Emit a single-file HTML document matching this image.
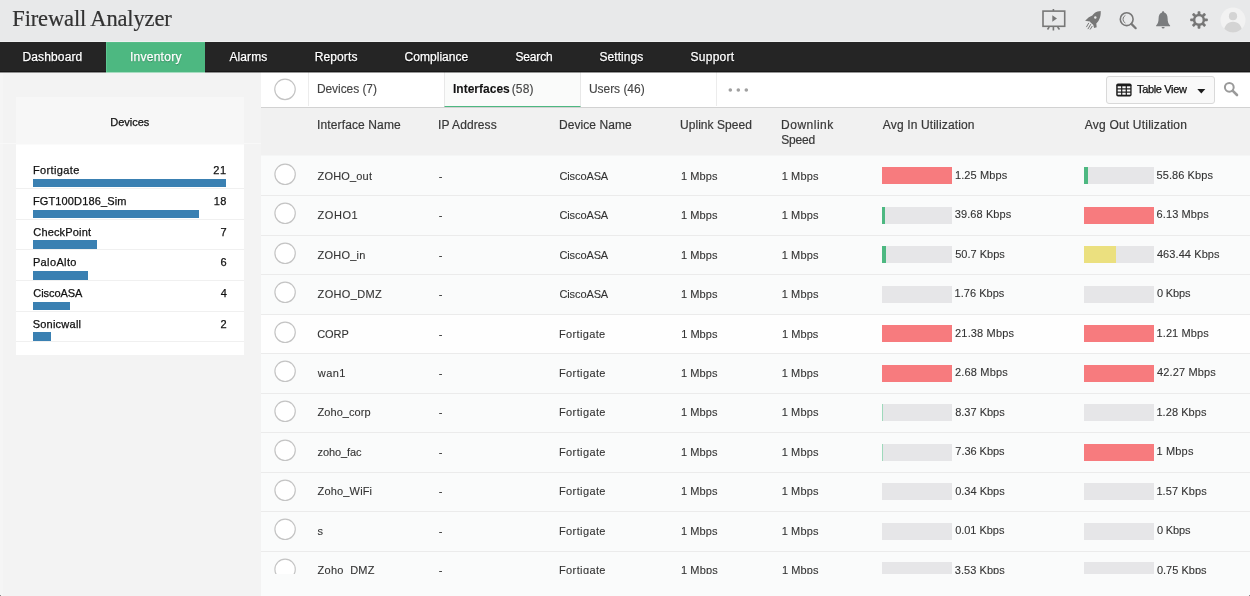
<!DOCTYPE html>
<html>
<head>
<meta charset="utf-8">
<title>Firewall Analyzer</title>
<style>
*{box-sizing:border-box;margin:0;padding:0}
html,body{width:1250px;height:596px;overflow:hidden;background:#f3f3f3;font-family:"Liberation Sans",sans-serif;color:#333}
body>div{will-change:transform}
#top{position:absolute;left:0;top:0;width:1250px;height:42px;background:#e8e9ea;border-bottom:1px solid #eff0f0}
#title{position:absolute;left:12.3px;top:6px;-webkit-text-stroke:0.2px #333;font-family:"Liberation Serif",serif;font-size:22.5px;line-height:26px;color:#333;letter-spacing:-0.15px;white-space:nowrap}
#top svg{position:absolute}
#nav{position:absolute;left:0;top:42px;width:1250px;height:30px;background:#252525;z-index:2}
#nav .ln{position:absolute;left:0;top:29px;width:1250px;height:2px;background:linear-gradient(#171717 50%,rgba(23,23,23,0.45) 50%)}
#nav .lg{position:absolute;left:106px;top:30px;width:99px;height:1px;background:#a6dcc0}
#nav span{position:absolute;top:0;height:30px;line-height:30px;color:#fff;font-size:12px;white-space:nowrap;text-shadow:0 1px 1px #000;-webkit-text-stroke:0.25px #fff}
#nav .act{position:absolute;left:106px;top:0;width:99px;height:30px;background:#4db881;border-left:1px solid #5ec792;border-top:1px solid #55bd88}
#nav span#t2{text-shadow:0 1px 1px rgba(0,60,30,0.45)}
#lstrip{position:absolute;left:0;top:73px;width:3px;height:523px;background:#f5f5f5}
.cnr{position:absolute;top:595px;width:1px;height:1px;background:#8a8a8a;z-index:5}
#sideline{position:absolute;left:0;top:143px;width:261px;height:1px;background:#f8f8f8}
#side{position:absolute;left:16px;top:97px;width:228px;height:258px;background:#fff}
#sidehd{position:absolute;left:0;top:0;width:228px;height:47.5px;background:#f7f7f7;border-bottom:1px solid #fbfbfb}
#sidehd span{position:absolute;top:18px;font-size:11px;line-height:14px;color:#111;white-space:nowrap;-webkit-text-stroke:0.25px #111}
.dv{position:absolute;left:0;width:228px;height:30.7px;border-bottom:1px solid #f0f0f0}
.dv span{position:absolute;top:5px;font-size:11px;line-height:14px;color:#111;white-space:nowrap;-webkit-text-stroke:0.25px #111}
.dv .b{position:absolute;left:17px;top:20.7px;height:8.5px;background:#3a80b2}
#main{position:absolute;left:261px;top:72px;width:989px;height:524px;background:#fafbfb}
#clip{position:absolute;left:0;top:0;width:989px;height:502px;overflow:hidden}
#tabs{position:absolute;left:0;top:0;width:989px;height:36px;background:#fff;border-bottom:1px solid #d2d2d2}
#tabs>span{position:absolute;top:1px;height:34px;line-height:33px;font-size:12px;color:#444;-webkit-text-stroke:0.12px #444;white-space:nowrap}
.tact{position:absolute;left:183px;top:0;width:137px;height:35px;border-left:1px solid #e8e8e8;border-right:1px solid #e8e8e8;border-bottom:1px solid #4db881;background:#fafbfa}
.vd{position:absolute;top:0;width:1px;height:34px;background:#ececec}
.dots{position:absolute;left:465px;top:14.4px}
svg.circ{position:absolute;left:0;top:0}
#thead{position:absolute;left:0;top:36px;width:989px;height:48px;background:#f1f1f1;border-bottom:1px solid #f5f6f6}
#thead span{position:absolute;top:10px;font-size:12px;line-height:15px;color:#383838;white-space:nowrap;-webkit-text-stroke:0.2px #383838}
.row{position:absolute;left:0;width:989px;height:39.5px;border-bottom:1px solid #ebebeb;background:#fafbfb}
.row span{position:absolute;top:12px;font-size:11px;line-height:14px;color:#333;white-space:nowrap;-webkit-text-stroke:0.1px #333}
.row span.v{top:11px}
.up span{top:11px}
.hv{background:#fefefe}
.bar{position:absolute;top:10.5px;width:70px;height:17px;background:#e6e6e8}
.bar i{position:absolute;left:0;top:0;height:100%;display:block}
.r{background:#f77b7e}.g{background:#4db881}.g2{background:#9ed9bb}.y{background:#ebe07f}
#tv{position:absolute;left:845px;top:4px;width:109px;height:27.5px;border:1px solid #d9d9d9;border-radius:3px;background:#f9f9f9}
#tv span{position:absolute;top:0;line-height:25px;font-size:11px;color:#111;white-space:nowrap;-webkit-text-stroke:0.25px #111}
#tv svg{position:absolute}
#tabs>svg{position:absolute}
</style>
</head>
<body>
<div id="top"><div id="title">Firewall Analyzer</div>
<svg style="left:1042px;top:9px" width="25" height="22" viewBox="0 0 25 22"><rect x="1" y="2.100" width="21.700" height="15.200" fill="none" stroke="#777" stroke-width="1.600"/><path d="M11.400 0v2M11.400 18v3.400M7.200 18l-1.700 2.500M15.600 18l1.900 2.500" stroke="#777" stroke-width="1.600" fill="none"/><path d="M10.300 6.300v6.400l4.700-3.200z" fill="#777"/></svg>
<svg style="left:1085px;top:10px" width="17" height="20" viewBox="0 0 17 20"><path d="M15.700 0.900C15.900 4 15.500 6.500 14.400 9C13.800 10.500 12.500 12.500 11.300 13.500L11.700 17.300L9.100 17.900L8.200 14.700C7 14.200 5.600 12.800 4.900 11.600L0.100 10.700L3.800 7.200L7.300 5.400C9 3.200 10.800 1.900 12.600 1.500C13.600 1.200 14.700 1 15.700 0.900Z" fill="#777"/><circle cx="10.300" cy="7.500" r="1.200" fill="#e8e9ea"/><path d="M3.800 12.900l-2.400 4.200M5.800 14.200l-2.900 4.900M7.300 16l-2.200 3.500" stroke="#777" stroke-width="1"/></svg>
<svg style="left:1119px;top:11.500px" width="19" height="18" viewBox="0 0 19 18"><circle cx="7.700" cy="7.200" r="6.400" fill="none" stroke="#777" stroke-width="1.600"/><path d="M6.400 3.400a4.200 4.200 0 0 0 0 7.600" fill="none" stroke="#777" stroke-width="1"/><path d="M12.400 11.900l4.300 4.300" stroke="#777" stroke-width="2.200" stroke-linecap="round"/></svg>
<svg style="left:1156px;top:11px" width="15" height="18" viewBox="0 0 15 18"><path d="M7.100 0.300C7.800 0.300 8.200 0.800 8.200 1.500C10.400 2.200 11.600 4.400 11.600 7.200C11.600 11 12.500 12.900 14.100 14.400L14.100 15.300L0.100 15.300L0.100 14.400C1.700 12.900 2.600 11 2.600 7.200C2.600 4.400 3.800 2.200 6 1.500C6 0.800 6.400 0.300 7.100 0.300Z" fill="#7a7c7e"/><path d="M5.600 16.100a1.500 1.500 0 0 0 3 0z" fill="#7a7c7e"/></svg>
<svg style="left:1190px;top:11px" width="18" height="18" viewBox="-9 -8.950 18 18"><g fill="#777"><rect x="-1.400" y="-8.800" width="2.800" height="17.600" rx="0.800"/><rect x="-1.400" y="-8.800" width="2.800" height="17.600" rx="0.800" transform="rotate(45)"/><rect x="-1.400" y="-8.800" width="2.800" height="17.600" rx="0.800" transform="rotate(90)"/><rect x="-1.400" y="-8.800" width="2.800" height="17.600" rx="0.800" transform="rotate(135)"/></g><circle r="6.100" fill="#777"/><circle r="3.600" fill="#e8e9ea"/></svg>
<svg style="left:1220px;top:7px" width="26" height="26" viewBox="0 0 26 26"><defs><clipPath id="av"><circle cx="13" cy="13" r="12.500"/></clipPath></defs><circle cx="13" cy="13" r="12.500" fill="#f2f2f2"/><g clip-path="url(#av)" fill="#d4d4d4"><circle cx="13" cy="9.200" r="4.100"/><path d="M3.800 26c0-7.500 4-11.300 9.200-11.300s9.200 3.800 9.200 11.300z"/></g></svg>
</div>
<div id="nav"><div class="ln"></div><div class="act"></div><div class="lg"></div>
<span id="t1" style="left:22.5px;letter-spacing:0.13px">Dashboard</span>
<span id="t2" style="left:129.9px;letter-spacing:0.27px">Inventory</span>
<span id="t3" style="left:229.4px;letter-spacing:0.12px">Alarms</span>
<span id="t4" style="left:314.7px;letter-spacing:0.12px">Reports</span>
<span id="t5" style="left:404.5px;letter-spacing:0.04px">Compliance</span>
<span id="t6" style="left:515.4px;letter-spacing:-0.14px">Search</span>
<span id="t7" style="left:599.5px;letter-spacing:0.04px">Settings</span>
<span id="t8" style="left:690.6px;letter-spacing:0.25px">Support</span>
</div>
<div id="lstrip"></div><div class="cnr" style="left:0"></div><div class="cnr" style="left:1249px"></div>
<div id="sideline"></div>
<div id="side"><div id="sidehd"><span id="t9" style="left:94.3px;letter-spacing:-0.03px">Devices</span></div>
<div class="dv" style="top:61.3px"><span id="t10" style="left:16.9px;letter-spacing:0.38px">Fortigate</span><span id="t11" style="left:197.3px;letter-spacing:0.60px">21</span><div class="b" style="width:193.0px"></div></div>
<div class="dv" style="top:92.0px"><span id="t12" style="left:16.9px;letter-spacing:0.14px">FGT100D186_Sim</span><span id="t13" style="left:197.8px;letter-spacing:0.38px">18</span><div class="b" style="width:166.0px"></div></div>
<div class="dv" style="top:122.7px"><span id="t14" style="left:17.3px;letter-spacing:0.16px">CheckPoint</span><span id="t15" style="left:204.5px;letter-spacing:-0.70px">7</span><div class="b" style="width:64.0px"></div></div>
<div class="dv" style="top:153.4px"><span id="t16" style="left:16.9px;letter-spacing:0.37px">PaloAlto</span><span id="t17" style="left:204.4px;letter-spacing:-0.70px">6</span><div class="b" style="width:55.0px"></div></div>
<div class="dv" style="top:184.1px"><span id="t18" style="left:17.3px;letter-spacing:-0.06px">CiscoASA</span><span id="t19" style="left:204.8px;letter-spacing:-0.70px">4</span><div class="b" style="width:37.0px"></div></div>
<div class="dv" style="top:214.8px"><span id="t20" style="left:16.7px;letter-spacing:0.23px">Sonicwall</span><span id="t21" style="left:204.5px;letter-spacing:-0.53px">2</span><div class="b" style="width:18.0px"></div></div>
</div>
<div id="main">
<div id="clip">
<div id="tabs"><svg class="circ" width="48" height="36"><circle cx="24" cy="17.300" r="10.250" fill="#fff" stroke="#c4c4c4" stroke-width="1.200"/></svg><div class="vd" style="left:47px"></div>
<div class="tact"></div>
<span id="t22" style="left:55.9px;letter-spacing:-0.06px">Devices (7)</span>
<span id="t23" style="left:192.0px;letter-spacing:0.01px;color:#111;font-weight:bold">Interfaces</span><span id="t24" style="left:250.7px;letter-spacing:0.18px">(58)</span>
<span id="t25" style="left:327.9px;letter-spacing:-0.03px">Users (46)</span><div class="vd" style="left:455px"></div>
<svg class="dots" width="30" height="8" viewBox="0 0 30 8"><g fill="#a0a0a0"><circle cx="4.300" cy="4" r="1.800"/><circle cx="12.300" cy="4" r="1.800"/><circle cx="20.300" cy="4" r="1.800"/></g></svg>
<div id="tv"><svg style="left:8.500px;top:6px" width="16" height="14" viewBox="0 0 16 14"><rect x="0.200" y="0.500" width="15.400" height="13" rx="1.800" fill="#1c1c1c"/><g fill="#f9f9f9"><rect x="1.700" y="3.300" width="3.400" height="2"/><rect x="6.300" y="3.300" width="3.400" height="2"/><rect x="10.900" y="3.300" width="3.400" height="2"/><rect x="1.700" y="6.500" width="3.400" height="2"/><rect x="6.300" y="6.500" width="3.400" height="2"/><rect x="10.900" y="6.500" width="3.400" height="2"/><rect x="1.700" y="9.700" width="3.400" height="2"/><rect x="6.300" y="9.700" width="3.400" height="2"/><rect x="10.900" y="9.700" width="3.400" height="2"/></g></svg><span id="t26" style="left:30.0px;letter-spacing:-0.34px">Table View</span><svg style="left:89.500px;top:11.500px" width="9" height="5" viewBox="0 0 9 5"><path d="M0.300 0h8L4.300 4.500z" fill="#1c1c1c"/></svg></div>
<svg style="left:962px;top:8.500px" width="16" height="16" viewBox="0 0 16 16"><circle cx="6.300" cy="6.300" r="4.400" fill="none" stroke="#9a9a9a" stroke-width="2"/><path d="M9.800 9.800l4.200 4.200" stroke="#9a9a9a" stroke-width="2.600" stroke-linecap="round"/></svg>
</div>
<div id="thead"><span id="t27" style="left:56.1px;letter-spacing:0.12px">Interface Name</span><span id="t28" style="left:177.0px;letter-spacing:0.10px">IP Address</span><span id="t29" style="left:298.1px;letter-spacing:0.05px">Device Name</span><span id="t30" style="left:419.0px;letter-spacing:0.04px">Uplink Speed</span><span id="t31" style="left:520.1px;letter-spacing:0.49px">Downlink</span><span id="t32" style="left:621.8px;letter-spacing:0.15px">Avg In Utilization</span><span id="t33" style="left:823.8px;letter-spacing:0.20px">Avg Out Utilization</span><span id="t34" style="left:520.3px;letter-spacing:-0.21px;top:24.6px">Speed</span></div>
<div class="row" style="top:84.5px"><svg class="circ" width="48" height="39"><circle cx="24.100" cy="17.300" r="10.200" fill="#fff" stroke="#c4c4c4" stroke-width="1.200"/></svg><span id="t35" style="left:56.6px;letter-spacing:0.17px">ZOHO_out</span><span id="t36" style="left:177.8px;letter-spacing:-0.70px">-</span><span id="t37" style="left:298.4px;letter-spacing:-0.10px">CiscoASA</span><span id="t38" style="left:419.9px;letter-spacing:0.11px">1 Mbps</span><span id="t39" style="left:520.7px;letter-spacing:0.13px">1 Mbps</span><div class="bar" style="left:621px"><i class="r" style="width:70px"></i></div><span class="v" id="t40" style="left:693.9px;letter-spacing:0.14px">1.25 Mbps</span><div class="bar" style="left:823px"><i class="g" style="width:3.5px"></i></div><span class="v" id="t41" style="left:895.5px;letter-spacing:0.08px">55.86 Kbps</span></div>
<div class="row" style="top:124.0px"><svg class="circ" width="48" height="39"><circle cx="24.100" cy="17.300" r="10.200" fill="#fff" stroke="#c4c4c4" stroke-width="1.200"/></svg><span id="t42" style="left:56.6px;letter-spacing:0.53px">ZOHO1</span><span id="t43" style="left:177.8px;letter-spacing:-0.70px">-</span><span id="t44" style="left:298.4px;letter-spacing:-0.10px">CiscoASA</span><span id="t45" style="left:419.9px;letter-spacing:0.11px">1 Mbps</span><span id="t46" style="left:520.7px;letter-spacing:0.13px">1 Mbps</span><div class="bar" style="left:621px"><i class="g" style="width:2.5px"></i></div><span class="v" id="t47" style="left:693.8px;letter-spacing:0.09px">39.68 Kbps</span><div class="bar" style="left:823px"><i class="r" style="width:70px"></i></div><span class="v" id="t48" style="left:895.5px;letter-spacing:0.12px">6.13 Mbps</span></div>
<div class="row" style="top:163.5px"><svg class="circ" width="48" height="39"><circle cx="24.100" cy="17.300" r="10.200" fill="#fff" stroke="#c4c4c4" stroke-width="1.200"/></svg><span id="t49" style="left:56.6px;letter-spacing:0.22px">ZOHO_in</span><span id="t50" style="left:177.8px;letter-spacing:-0.70px">-</span><span id="t51" style="left:298.4px;letter-spacing:-0.10px">CiscoASA</span><span id="t52" style="left:419.9px;letter-spacing:0.11px">1 Mbps</span><span id="t53" style="left:520.7px;letter-spacing:0.13px">1 Mbps</span><div class="bar" style="left:621px"><i class="g" style="width:3.5px"></i></div><span class="v" id="t54" style="left:694.2px;letter-spacing:0.01px">50.7 Kbps</span><div class="bar" style="left:823px"><i class="y" style="width:31.7px"></i></div><span class="v" id="t55" style="left:895.9px;letter-spacing:0.09px">463.44 Kbps</span></div>
<div class="row" style="top:203.0px"><svg class="circ" width="48" height="39"><circle cx="24.100" cy="17.300" r="10.200" fill="#fff" stroke="#c4c4c4" stroke-width="1.200"/></svg><span id="t56" style="left:56.6px;letter-spacing:0.35px">ZOHO_DMZ</span><span id="t57" style="left:177.8px;letter-spacing:-0.70px">-</span><span id="t58" style="left:298.4px;letter-spacing:-0.10px">CiscoASA</span><span id="t59" style="left:419.9px;letter-spacing:0.11px">1 Mbps</span><span id="t60" style="left:520.7px;letter-spacing:0.13px">1 Mbps</span><div class="bar" style="left:621px"></div><span class="v" id="t61" style="left:693.6px;letter-spacing:0.02px">1.76 Kbps</span><div class="bar" style="left:823px"></div><span class="v" id="t62" style="left:895.9px;letter-spacing:-0.12px">0 Kbps</span></div>
<div class="row hv" style="top:242.5px"><svg class="circ" width="48" height="39"><circle cx="24.100" cy="17.300" r="10.200" fill="#fff" stroke="#c4c4c4" stroke-width="1.200"/></svg><span id="t63" style="left:56.2px;letter-spacing:-0.05px">CORP</span><span id="t64" style="left:177.8px;letter-spacing:-0.70px">-</span><span id="t65" style="left:297.9px;letter-spacing:0.36px">Fortigate</span><span id="t66" style="left:420.2px;letter-spacing:0.03px">1 Mbps</span><span id="t67" style="left:521.0px;letter-spacing:0.06px">1 Mbps</span><div class="bar" style="left:621px"><i class="r" style="width:70px"></i></div><span class="v" id="t68" style="left:694.1px;letter-spacing:0.15px">21.38 Mbps</span><div class="bar" style="left:823px"><i class="r" style="width:70px"></i></div><span class="v" id="t69" style="left:895.5px;letter-spacing:0.11px">1.21 Mbps</span></div>
<div class="row" style="top:282.0px"><svg class="circ" width="48" height="39"><circle cx="24.100" cy="17.300" r="10.200" fill="#fff" stroke="#c4c4c4" stroke-width="1.200"/></svg><span id="t70" style="left:56.8px;letter-spacing:0.41px">wan1</span><span id="t71" style="left:177.8px;letter-spacing:-0.70px">-</span><span id="t72" style="left:298.0px;letter-spacing:0.38px">Fortigate</span><span id="t73" style="left:419.9px;letter-spacing:0.11px">1 Mbps</span><span id="t74" style="left:520.7px;letter-spacing:0.13px">1 Mbps</span><div class="bar" style="left:621px"><i class="r" style="width:70px"></i></div><span class="v" id="t75" style="left:694.1px;letter-spacing:0.16px">2.68 Mbps</span><div class="bar" style="left:823px"><i class="r" style="width:70px"></i></div><span class="v" id="t76" style="left:895.9px;letter-spacing:0.16px">42.27 Mbps</span></div>
<div class="row up" style="top:321.5px"><svg class="circ" width="48" height="39"><circle cx="24.100" cy="17.300" r="10.200" fill="#fff" stroke="#c4c4c4" stroke-width="1.200"/></svg><span id="t77" style="left:56.6px;letter-spacing:0.04px">Zoho_corp</span><span id="t78" style="left:177.8px;letter-spacing:-0.70px">-</span><span id="t79" style="left:298.0px;letter-spacing:0.38px">Fortigate</span><span id="t80" style="left:419.9px;letter-spacing:0.11px">1 Mbps</span><span id="t81" style="left:520.7px;letter-spacing:0.13px">1 Mbps</span><div class="bar" style="left:621px"><i class="g2" style="width:1px"></i></div><span class="v" id="t82" style="left:694.2px;letter-spacing:-0.00px">8.37 Kbps</span><div class="bar" style="left:823px"></div><span class="v" id="t83" style="left:895.4px;letter-spacing:0.07px">1.28 Kbps</span></div>
<div class="row" style="top:361.0px"><svg class="circ" width="48" height="39"><circle cx="24.100" cy="17.300" r="10.200" fill="#fff" stroke="#c4c4c4" stroke-width="1.200"/></svg><span id="t84" style="left:56.6px;letter-spacing:-0.12px">zoho_fac</span><span id="t85" style="left:177.8px;letter-spacing:-0.70px">-</span><span id="t86" style="left:298.0px;letter-spacing:0.38px">Fortigate</span><span id="t87" style="left:419.9px;letter-spacing:0.11px">1 Mbps</span><span id="t88" style="left:520.7px;letter-spacing:0.13px">1 Mbps</span><div class="bar" style="left:621px"><i class="g2" style="width:1px"></i></div><span class="v" id="t89" style="left:694.3px;letter-spacing:-0.03px">7.36 Kbps</span><div class="bar" style="left:823px"><i class="r" style="width:70px"></i></div><span class="v" id="t90" style="left:895.4px;letter-spacing:0.19px">1 Mbps</span></div>
<div class="row up" style="top:400.5px"><svg class="circ" width="48" height="39"><circle cx="24.100" cy="17.300" r="10.200" fill="#fff" stroke="#c4c4c4" stroke-width="1.200"/></svg><span id="t91" style="left:56.6px;letter-spacing:0.16px">Zoho_WiFi</span><span id="t92" style="left:177.8px;letter-spacing:-0.70px">-</span><span id="t93" style="left:298.0px;letter-spacing:0.38px">Fortigate</span><span id="t94" style="left:419.9px;letter-spacing:0.11px">1 Mbps</span><span id="t95" style="left:520.7px;letter-spacing:0.13px">1 Mbps</span><div class="bar" style="left:621px"></div><span class="v" id="t96" style="left:694.2px;letter-spacing:-0.00px">0.34 Kbps</span><div class="bar" style="left:823px"></div><span class="v" id="t97" style="left:895.4px;letter-spacing:0.09px">1.57 Kbps</span></div>
<div class="row" style="top:440.0px"><svg class="circ" width="48" height="39"><circle cx="24.100" cy="17.300" r="10.200" fill="#fff" stroke="#c4c4c4" stroke-width="1.200"/></svg><span id="t98" style="left:56.6px;letter-spacing:-0.70px">s</span><span id="t99" style="left:177.8px;letter-spacing:-0.70px">-</span><span id="t100" style="left:298.0px;letter-spacing:0.38px">Fortigate</span><span id="t101" style="left:419.9px;letter-spacing:0.11px">1 Mbps</span><span id="t102" style="left:520.7px;letter-spacing:0.13px">1 Mbps</span><div class="bar" style="left:621px"></div><span class="v" id="t103" style="left:694.2px;letter-spacing:-0.04px">0.01 Kbps</span><div class="bar" style="left:823px"></div><span class="v" id="t104" style="left:895.9px;letter-spacing:-0.12px">0 Kbps</span></div>
<div class="row up" style="top:479.5px"><svg class="circ" width="48" height="39"><circle cx="24.100" cy="17.300" r="10.200" fill="#fff" stroke="#c4c4c4" stroke-width="1.200"/></svg><span id="t105" style="left:56.6px;letter-spacing:0.27px">Zoho_DMZ</span><span id="t106" style="left:177.8px;letter-spacing:-0.70px">-</span><span id="t107" style="left:298.0px;letter-spacing:0.38px">Fortigate</span><span id="t108" style="left:419.9px;letter-spacing:0.14px">1 Mbps</span><span id="t109" style="left:520.9px;letter-spacing:0.09px">1 Mbps</span><div class="bar" style="left:621px"></div><span class="v" id="t110" style="left:693.8px;letter-spacing:0.05px">3.53 Kbps</span><div class="bar" style="left:823px"></div><span class="v" id="t111" style="left:895.9px;letter-spacing:0.02px">0.75 Kbps</span></div>
</div>
</div>
</body>
</html>
